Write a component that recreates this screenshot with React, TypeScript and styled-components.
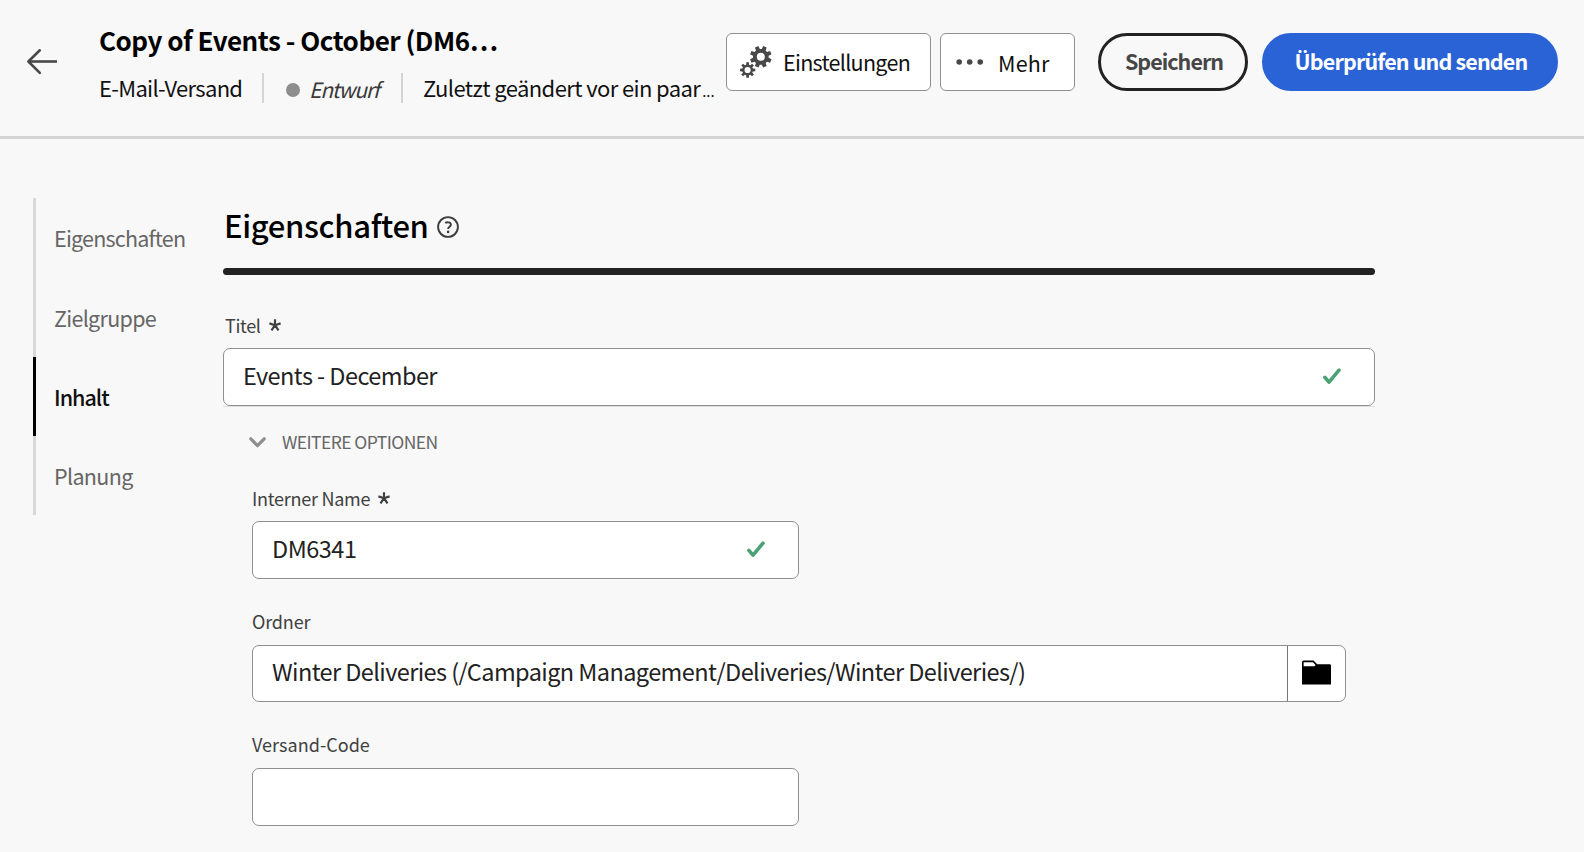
import React from "react";
import styled, { createGlobalStyle } from "styled-components";

const GlobalStyle = createGlobalStyle`
  *, *::before, *::after { box-sizing: border-box; }
  body {
    margin: 0;
    background: #f8f8f8;
    color: #222;
    font-family: "Noto Sans CJK SC", "Noto Sans", sans-serif;
    overflow: hidden;
  }
  svg { display: block; flex: none; }
`;

const Page = styled.div`
  width: 1584px;
  height: 852px;
  overflow: hidden;
`;

/* Header */

const Header = styled.header`
  display: flex;
  align-items: flex-start;
  height: 139px;
  border-bottom: 3px solid #d4d4d4;
`;

const BackButton = styled.button`
  display: flex;
  margin: 47px 0 0 26px;
  padding: 0;
  border: 0;
  background: none;
`;

const TitleBlock = styled.div`
  width: 627px;
  margin-left: 41px;
  padding-top: 20px;
`;

const Title = styled.h1`
  margin: 0;
  font-size: 26px;
  font-weight: 700;
  line-height: 40px;
  letter-spacing: -0.49px;
  color: #000;
  white-space: nowrap;
`;

const Meta = styled.div`
  display: flex;
  align-items: center;
  height: 30px;
  margin-top: 13px;
  font-size: 22px;
  line-height: 30px;
  color: #111;
  white-space: nowrap;
`;

const DeliveryType = styled.span`
  width: 163px;
  padding-bottom: 2px;
  letter-spacing: -0.69px;
`;

const Divider = styled.span`
  width: 2px;
  height: 30px;
  background: #d5d5d5;
`;

const Status = styled.span`
  display: flex;
  align-items: center;
  gap: 9px;
  width: 137px;
  padding: 3px 0 0 22px;
  font-size: 21px;
  font-style: italic;
  color: #3a3a3a;
`;

const StatusDot = styled.span`
  width: 14px;
  height: 14px;
  border-radius: 50%;
  background: #8e8e8e;
`;

const StatusText = styled.span`
  padding-bottom: 2px;
  letter-spacing: -1.2px;
`;

const Modified = styled.span`
  margin-left: 20px;
  padding-bottom: 2px;
  letter-spacing: -0.61px;
`;

const Ellipsis = styled.span`
  margin-left: 2px;
  font-size: 15px;
  line-height: 1;
  letter-spacing: 0;
`;

const Actions = styled.div`
  display: flex;
  padding-top: 33px;
  font-size: 21.5px;
`;

const ToolButton = styled.button<{ $width: number; $gap: number; $left: number }>`
  display: flex;
  align-items: center;
  gap: ${(p) => p.$gap}px;
  width: ${(p) => p.$width}px;
  height: 58px;
  margin-right: 9px;
  padding: 0 0 0 ${(p) => p.$left}px;
  border: 1px solid #909090;
  border-radius: 6px;
  background: #fff;
  font: inherit;
  color: #111;
  white-space: nowrap;
`;

const ToolLabel = styled.span<{ $spacing: number; $drop?: number }>`
  padding-top: ${(p) => p.$drop ?? 0}px;
  line-height: 30px;
  letter-spacing: ${(p) => p.$spacing}px;
`;

const PillButton = styled.button<{ $primary?: boolean }>`
  width: ${(p) => (p.$primary ? 296 : 150)}px;
  height: 58px;
  margin-left: 14px;
  padding: 0 0 4px 2px;
  border: 3px solid ${(p) => (p.$primary ? "#2a63d6" : "#222")};
  border-radius: 29px;
  background: ${(p) => (p.$primary ? "#2a63d6" : "transparent")};
  color: ${(p) => (p.$primary ? "#fff" : "#464646")};
  font: inherit;
  font-weight: 700;
  letter-spacing: ${(p) => (p.$primary ? -0.86 : -0.98)}px;
  white-space: nowrap;
`;

/* Body */

const Body = styled.div`
  display: flex;
  align-items: flex-start;
  padding: 59px 0 0 33px;
`;

const Nav = styled.nav`
  display: flex;
  flex-direction: column;
  width: 190px;
`;

const NavItem = styled.a<{ $active?: boolean; $height: number; $spacing: number; $drop: number }>`
  height: ${(p) => p.$height}px;
  padding: ${(p) => p.$drop}px 0 0 18px;
  border-left: 3px solid ${(p) => (p.$active ? "#000" : "#d8d8d8")};
  font-size: 21.5px;
  font-weight: ${(p) => (p.$active ? 500 : 400)};
  line-height: 30px;
  letter-spacing: ${(p) => p.$spacing}px;
  color: ${(p) => (p.$active ? "#111" : "#666")};
`;

const Main = styled.main`
  width: 1152px;
`;

const Heading = styled.div`
  display: flex;
  align-items: center;
  gap: 8px;
  height: 54px;
  padding-left: 1px;
`;

const HeadingText = styled.h2`
  margin: 0;
  font-size: 31px;
  font-weight: 500;
  line-height: 54px;
  letter-spacing: -0.35px;
  color: #000;
`;

const HelpSlot = styled.span`
  padding-top: 3px;
`;

const Rule = styled.div`
  height: 7px;
  margin: 16px 0 35px;
  border-radius: 4px;
  background: #222;
`;

const FieldLabel = styled.label<{ $spacing?: number; $gap?: number; $indent?: number }>`
  display: flex;
  align-items: center;
  gap: 8px;
  height: 30px;
  margin-bottom: ${(p) => p.$gap ?? 8}px;
  padding-left: ${(p) => p.$indent ?? 0}px;
  font-size: 18px;
  line-height: 30px;
  letter-spacing: ${(p) => p.$spacing ?? 0}px;
  color: #404040;
`;

const TitleField = styled.div`
  border-bottom: 1px solid #dedede;
`;

const Field = styled.div<{ $width: number; $height?: number; $end?: number }>`
  display: flex;
  align-items: center;
  justify-content: space-between;
  width: ${(p) => p.$width}px;
  height: ${(p) => p.$height ?? 58}px;
  padding: 0 ${(p) => p.$end ?? 33}px 0 19px;
  border: 1px solid #8f8f8f;
  border-radius: 7px;
  background: #fff;
`;

const Value = styled.span<{ $spacing: number; $lift?: number }>`
  padding-bottom: ${(p) => p.$lift ?? 4}px;
  font-size: 23.5px;
  line-height: 32px;
  letter-spacing: ${(p) => p.$spacing}px;
  white-space: nowrap;
`;

const Toggle = styled.div`
  display: flex;
  align-items: center;
  gap: 16px;
  height: 30px;
  margin: 20px 0 26px 26px;
  font-size: 17.5px;
  line-height: 30px;
  letter-spacing: -0.57px;
  color: #666;
`;

const Options = styled.div`
  display: flex;
  flex-direction: column;
  padding-left: 29px;
`;

const OptionGroup = styled.div<{ $after?: number }>`
  margin-bottom: ${(p) => p.$after ?? 0}px;
`;

const BrowseButton = styled.button`
  display: flex;
  align-items: center;
  justify-content: center;
  width: 58px;
  height: 55px;
  padding: 0 0 2px;
  border: 0;
  border-left: 1px solid #777;
  background: none;
`;

/* Drawings */

const gearPath = (cx: number, cy: number, outer: number, inner: number, hole: number, turn: number) => {
  const at = (r: number, a: number) =>
    `${(cx + r * Math.cos(a)).toFixed(2)} ${(cy + r * Math.sin(a)).toFixed(2)}`;
  const points: string[] = [];
  for (let i = 0; i < 8; i++) {
    const a = (i * Math.PI) / 4 + turn;
    points.push(at(inner, a - 0.27), at(outer, a - 0.17), at(outer, a + 0.17), at(inner, a + 0.27));
  }
  return `M${points.join("L")}ZM${cx - hole} ${cy}a${hole} ${hole} 0 1 0 ${hole * 2} 0a${hole} ${hole} 0 1 0 ${-hole * 2} 0Z`;
};

const GearsIcon = () => (
  <svg width="32" height="34" viewBox="0 0 32 34" fill="#484848" fillRule="evenodd">
    <path d={gearPath(20.8, 11.8, 11, 7.9, 4, Math.PI / 8)} />
    <path d={gearPath(7.6, 25, 7.8, 5.4, 3.1, 0)} />
  </svg>
);

const DotsIcon = () => (
  <svg width="28" height="8" viewBox="0 0 28 8" fill="#484848">
    <circle cx="3.2" cy="4" r="2.8" />
    <circle cx="13.7" cy="4" r="2.8" />
    <circle cx="24.2" cy="4" r="2.8" />
  </svg>
);

const ArrowIcon = () => (
  <svg width="32" height="29" viewBox="0 0 32 29" fill="none" stroke="#484848" strokeWidth="2.6" strokeLinecap="round" strokeLinejoin="round">
    <path d="M13.8 3.3L2.4 14.5L13.8 25.8" />
    <path d="M2.4 14.5H31" strokeLinecap="butt" />
  </svg>
);

const HelpIcon = () => (
  <svg width="22" height="22" viewBox="0 0 22 22" fill="none" stroke="#3d3d3d" strokeWidth="1.9">
    <circle cx="11" cy="11" r="9.9" />
    <path d="M8.2 7.1C9.6 6 13.9 5.7 13.9 8.7C13.9 10.7 11.1 10.9 11.1 13" />
    <circle cx="11.1" cy="15.9" r="1.3" fill="#3d3d3d" stroke="none" />
  </svg>
);

const RequiredIcon = () => (
  <svg width="12" height="12" viewBox="0 0 12 12" fill="none" stroke="#404040" strokeWidth="2.2">
    <path d="M6 6.2V0.2M6 6.2L0.4 4.4M6 6.2L11.6 4.4M6 6.2L2.5 11.4M6 6.2L9.5 11.4" />
  </svg>
);

const CheckIcon = () => (
  <svg width="18" height="18" viewBox="0 0 18 18" fill="none" stroke="#4aa274" strokeWidth="3.6" strokeLinecap="round" strokeLinejoin="round">
    <path d="M1.9 9.4L6 14.2L16 2.2" />
  </svg>
);

const ChevronIcon = () => (
  <svg width="17" height="11" viewBox="0 0 17 11" fill="none" stroke="#8e8e8e" strokeWidth="3.2" strokeLinecap="round" strokeLinejoin="round">
    <path d="M1.8 1.8L8.5 8.7L15.2 1.8" />
  </svg>
);

const FolderIcon = () => (
  <svg width="29" height="25" viewBox="0 0 29 25">
    <path d="M0 2.2Q0 0.5 1.7 0.5H11.5L15.2 4.2H27.6Q29 4.2 29 5.6V24.5H0Z" fill="#000" />
    <path d="M1.6 2.2H11L13.6 4.9L12.4 6.2H1.6Z" fill="#fff" />
  </svg>
);

const App = () => (
  <Page>
    <GlobalStyle />
    <Header>
      <BackButton aria-label="Zurück">
        <ArrowIcon />
      </BackButton>
      <TitleBlock>
        <Title>Copy of Events - October (DM6…</Title>
        <Meta>
          <DeliveryType>E-Mail-Versand</DeliveryType>
          <Divider />
          <Status>
            <StatusDot />
            <StatusText>Entwurf</StatusText>
          </Status>
          <Divider />
          <Modified>
            Zuletzt geändert vor ein paar<Ellipsis>...</Ellipsis>
          </Modified>
        </Meta>
      </TitleBlock>
      <Actions>
        <ToolButton $width={205} $gap={11} $left={13}>
          <GearsIcon />
          <ToolLabel $spacing={-0.7}>Einstellungen</ToolLabel>
        </ToolButton>
        <ToolButton $width={135} $gap={14} $left={15}>
          <DotsIcon />
          <ToolLabel $spacing={0.2} $drop={2}>Mehr</ToolLabel>
        </ToolButton>
        <PillButton>Speichern</PillButton>
        <PillButton $primary>Überprüfen und senden</PillButton>
      </Actions>
    </Header>
    <Body>
      <Nav>
        <NavItem $height={79} $spacing={-0.78} $drop={25}>Eigenschaften</NavItem>
        <NavItem $height={80} $spacing={-0.7} $drop={26}>Zielgruppe</NavItem>
        <NavItem $height={79} $spacing={-0.98} $drop={25} $active>Inhalt</NavItem>
        <NavItem $height={79} $spacing={-0.65} $drop={25}>Planung</NavItem>
      </Nav>
      <Main>
        <Heading>
          <HeadingText>Eigenschaften</HeadingText>
          <HelpSlot><HelpIcon /></HelpSlot>
        </Heading>
        <Rule />
        <FieldLabel $indent={2} $spacing={-0.35}>
          Titel
          <RequiredIcon />
        </FieldLabel>
        <TitleField>
          <Field $width={1152}>
            <Value $spacing={-0.56}>Events - December</Value>
            <CheckIcon />
          </Field>
        </TitleField>
        <Toggle>
          <ChevronIcon />
          WEITERE OPTIONEN
        </Toggle>
        <Options>
          <OptionGroup $after={27}>
            <FieldLabel $spacing={-0.25}>
              Interner Name
              <RequiredIcon />
            </FieldLabel>
            <Field $width={547}>
              <Value $spacing={-0.5}>DM6341</Value>
              <CheckIcon />
            </Field>
          </OptionGroup>
          <OptionGroup $after={27}>
            <FieldLabel $spacing={-0.15} $gap={9}>Ordner</FieldLabel>
            <Field $width={1094} $height={57} $end={0}>
              <Value $spacing={-0.587} $lift={5}>
                Winter Deliveries (/Campaign Management/Deliveries/Winter Deliveries/)
              </Value>
              <BrowseButton aria-label="Ordner auswählen">
                <FolderIcon />
              </BrowseButton>
            </Field>
          </OptionGroup>
          <OptionGroup>
            <FieldLabel $spacing={0.04} $gap={9}>Versand-Code</FieldLabel>
            <Field $width={547} />
          </OptionGroup>
        </Options>
      </Main>
    </Body>
  </Page>
);

export default App;
